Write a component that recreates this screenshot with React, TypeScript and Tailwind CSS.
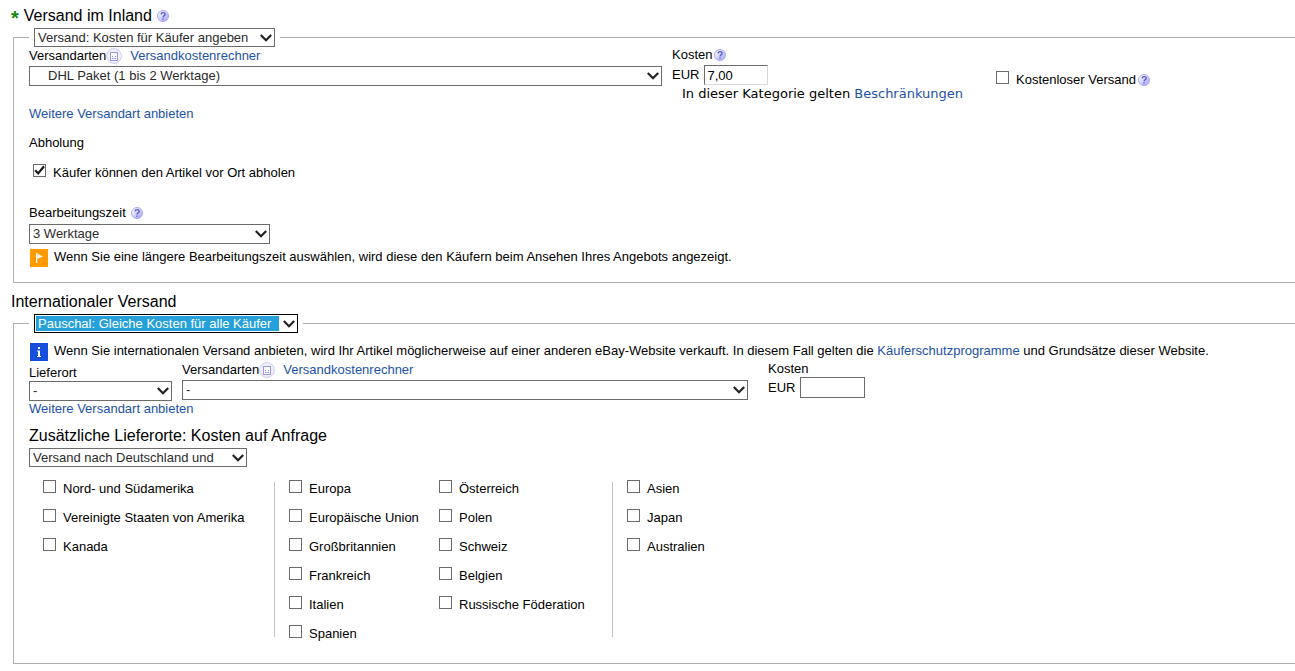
import { useState } from "react";
import type { ReactNode } from "react";

const europeWest = ["Europa", "Europäische Union", "Großbritannien", "Frankreich", "Italien", "Spanien"];
const europeEast = ["Österreich", "Polen", "Schweiz", "Belgien", "Russische Föderation"];
const america = ["Nord- und Südamerika", "Vereinigte Staaten von Amerika", "Kanada"];
const asia = ["Asien", "Japan", "Australien"];

function HelpIcon() {
  return (
    <svg viewBox="0 0 12 12" className="size-3 shrink-0" aria-hidden="true">
      <defs>
        <linearGradient id="help" x1="0" y1="0" x2="1" y2="1">
          <stop offset="0.2" stopColor="#f4f4ff" />
          <stop offset="1" stopColor="#9c9cf8" />
        </linearGradient>
      </defs>
      <circle cx="6" cy="6" r="5.5" fill="url(#help)" stroke="#9f9fee" strokeWidth="0.9" />
      <path
        d="M4 4.4C4.2 2.1 8.2 2.1 8.1 4.4C8 5.8 6.1 5.6 6 7.4M6 8.4V9.7"
        fill="none"
        stroke="#5252c8"
        strokeWidth="1.3"
      />
    </svg>
  );
}

function CalculatorIcon() {
  return (
    <svg viewBox="0 0 16 16" className="size-4 shrink-0" aria-hidden="true">
      <circle cx="8" cy="8" r="7.4" fill="#f0f0ff" stroke="#cdcdf8" />
      <rect x="4.5" y="4.5" width="7" height="8" fill="#f8f8ff" stroke="#9a96e0" />
      <path d="M6 8.5h1M9 8.5h1M6 10.5h1M7.5 10.5h1M9 10.5h1" stroke="#8f8bdc" />
    </svg>
  );
}

function FlagIcon() {
  return (
    <svg viewBox="0 0 18 18" className="size-[18px] shrink-0" aria-hidden="true">
      <rect width="18" height="18" fill="#ff9a00" />
      <path d="M6 4h1.3v10H6z" fill="#fff" />
      <path d="M7.3 4.6L13 7.4L7.3 10z" fill="#fff3e0" />
    </svg>
  );
}

function InfoIcon() {
  return (
    <svg viewBox="0 0 18 18" className="size-[18px] shrink-0" aria-hidden="true">
      <rect width="18" height="18" fill="#1450dc" />
      <path d="M8 4h2v2H8zM7 7.5h3V13h1v1H7v-1h1V8.5H7z" fill="#fff" />
    </svg>
  );
}

type SelectProps = {
  id: string;
  label?: string;
  options: string[];
  className?: string;
  selectClass?: string;
};

function Select({
  id,
  label,
  options,
  className = "",
  selectClass = "h-5 border-[#6b6b6b] pr-5 pl-[3px] text-[#2b2b2b]",
}: SelectProps) {
  return (
    <span className={`grid ${className}`}>
      <select
        id={id}
        aria-label={label}
        className={`col-start-1 row-start-1 w-full appearance-none rounded-none border text-[13px] leading-4 outline-none ${selectClass}`}
      >
        {options.map((o) => (
          <option key={o}>{o}</option>
        ))}
      </select>
      <svg
        viewBox="0 0 12 8"
        className="pointer-events-none col-start-1 row-start-1 mr-[3px] h-2 w-3 self-center justify-self-end"
        aria-hidden="true"
      >
        <path d="M0.8 1L6 6.2L11.2 1" fill="none" stroke="#222" strokeWidth="2.2" />
      </svg>
    </span>
  );
}

function Checkbox({ label, checked = false, children }: { label: string; checked?: boolean; children?: ReactNode }) {
  const [on, setOn] = useState(checked);
  return (
    <div className="flex h-4 items-start">
      <label className="flex items-start gap-[7px]">
        <span className="grid">
          <input
            type="checkbox"
            checked={on}
            onChange={(e) => setOn(e.target.checked)}
            className="col-start-1 row-start-1 size-[13px] appearance-none border border-[#6b6b6b] bg-white"
          />
          {on && (
            <svg viewBox="0 0 13 13" className="pointer-events-none col-start-1 row-start-1 size-[13px]" aria-hidden="true">
              <path d="M2.2 6.2L5.2 9.4L11 2.2" fill="none" stroke="#1a1a1a" strokeWidth="2.2" />
            </svg>
          )}
        </span>
        <span className="leading-[18px] whitespace-nowrap">{label}</span>
      </label>
      {children}
    </div>
  );
}

function CheckboxList({ items, className }: { items: string[]; className: string }) {
  return (
    <div className={`flex flex-col gap-[13px] ${className}`}>
      {items.map((item) => (
        <Checkbox key={item} label={item} />
      ))}
    </div>
  );
}

function Link({ children }: { children: ReactNode }) {
  return (
    <a href="#" className="text-[#1c52a8]">
      {children}
    </a>
  );
}

export default function App() {
  return (
    <form className="bg-white pl-[11px] font-['Liberation_Sans',Arial,sans-serif] text-[13px] leading-4 text-black">
      <h2 className="flex h-7 items-center gap-[5px] pt-1 text-base">
        <span className="pt-1 text-xl leading-5 font-bold text-[#128a12]">*</span>
        Versand im Inland
        <HelpIcon />
      </h2>
      <fieldset className="ml-0.5 border border-r-0 border-[#b0b0b0] pb-[15px] pl-[15px]">
        <legend className="px-[5px]">
          <Select
            id="domestic"
            label="Versand im Inland"
            options={["Versand: Kosten für Käufer angeben"]}
            className="w-[241px]"
            selectClass="h-[19px] border-[#6b6b6b] pr-5 pl-[3px] text-[#2b2b2b]"
          />
        </legend>
        <div className="flex gap-2.5">
          <div className="w-1/2 shrink-0">
            <div className="mb-0.5 flex h-[17px] items-center">
              <label htmlFor="service">Versandarten</label>
              <CalculatorIcon />
              <span className="ml-2">
                <Link>Versandkostenrechner</Link>
              </span>
            </div>
            <Select
              id="service"
              options={["DHL Paket (1 bis 2 Werktage)"]}
              selectClass="h-5 border-[#6b6b6b] pr-5 pl-[18px] text-[#2b2b2b]"
            />
          </div>
          <div className="w-[314px] shrink-0">
            <div className="mb-0.5 flex h-4 items-center gap-0.5">
              <label htmlFor="cost">Kosten</label>
              <HelpIcon />
            </div>
            <div className="flex items-center gap-[5px]">
              EUR
              <input
                id="cost"
                defaultValue="7,00"
                className="h-5 w-16 border border-t-[#6b6b6b] border-r-[#d8d8d8] border-b-[#d8d8d8] border-l-[#6b6b6b] px-0.5 outline-none"
              />
            </div>
            <p className="pl-2.5 font-['DejaVu_Sans',Verdana,sans-serif] leading-[18px] whitespace-nowrap">
              In dieser Kategorie gelten <Link>Beschränkungen</Link>
            </p>
          </div>
          <div className="pt-6">
            <Checkbox label="Kostenloser Versand">
              <span className="pt-[3px] pl-0.5">
                <HelpIcon />
              </span>
            </Checkbox>
          </div>
        </div>
        <p className="mt-[3px]">
          <Link>Weitere Versandart anbieten</Link>
        </p>
        <p className="my-[13px]">Abholung</p>
        <div className="pl-1">
          <Checkbox label="Käufer können den Artikel vor Ort abholen" checked />
        </div>
        <div className="mt-[25px] mb-[3px] flex items-center gap-[5px]">
          <label htmlFor="handling">Bearbeitungszeit</label>
          <HelpIcon />
        </div>
        <Select id="handling" options={["3 Werktage"]} className="w-[241px]" />
        <p className="mt-[5px] flex gap-1.5 pl-px">
          <FlagIcon />
          Wenn Sie eine längere Bearbeitungszeit auswählen, wird diese den Käufern beim Ansehen Ihres Angebots angezeigt.
        </p>
      </fieldset>

      <h2 className="mt-[7px] h-6 text-base">Internationaler Versand</h2>
      <fieldset className="ml-0.5 border border-r-0 border-[#b0b0b0] pb-[22px] pl-[15px]">
        <legend className="px-[5px]">
          <Select
            id="international"
            label="Internationaler Versand"
            options={["Pauschal: Gleiche Kosten für alle Käufer"]}
            className="w-[264px]"
            selectClass="h-[19px] border-black bg-[#26a0da] bg-clip-content pt-px pr-[18px] pb-px pl-px indent-[2px] text-white"
          />
        </legend>
        <p className="mt-2.5 flex gap-1.5 pl-px">
          <InfoIcon />
          <span>
            Wenn Sie internationalen Versand anbieten, wird Ihr Artikel möglicherweise auf einer anderen eBay-Website
            verkauft. In diesem Fall gelten die <Link>Käuferschutzprogramme</Link> und Grundsätze dieser Website.
          </span>
        </p>
        <div className="grid grid-cols-[143px_minmax(0,566px)_auto] gap-x-2.5">
          <div className="pt-1">
            <label htmlFor="place" className="block">
              Lieferort
            </label>
            <Select id="place" options={["-"]} />
          </div>
          <div>
            <div className="mb-0.5 flex h-[17px] items-center">
              <label htmlFor="intlService">Versandarten</label>
              <CalculatorIcon />
              <span className="ml-2">
                <Link>Versandkostenrechner</Link>
              </span>
            </div>
            <Select id="intlService" options={["-"]} />
          </div>
          <div className="pl-2.5">
            <label htmlFor="intlCost" className="block">
              Kosten
            </label>
            <div className="flex items-center gap-[5px]">
              EUR
              <input id="intlCost" className="h-[21px] w-[65px] border border-[#6b6b6b] px-0.5 outline-none" />
            </div>
          </div>
        </div>
        <p>
          <Link>Weitere Versandart anbieten</Link>
        </p>
        <h3 className="mt-2 mb-px text-base leading-[22px]">
          <label htmlFor="extra">Zusätzliche Lieferorte: Kosten auf Anfrage</label>
        </h3>
        <Select
          id="extra"
          options={["Versand nach Deutschland und"]}
          className="w-[218px]"
          selectClass="h-[19px] border-[#6b6b6b] pr-5 pl-[3px] text-[#2b2b2b]"
        />
        <div className="mt-[13px] flex">
          <CheckboxList items={america} className="w-[245px] pl-3.5" />
          <div className="mt-0.5 mb-1 w-px bg-[#c4c4c4]" />
          <CheckboxList items={europeWest} className="w-[164px] pl-3.5" />
          <CheckboxList items={europeEast} className="w-[173px]" />
          <div className="mt-0.5 mb-1 w-px bg-[#c4c4c4]" />
          <CheckboxList items={asia} className="pl-3.5" />
        </div>
      </fieldset>
    </form>
  );
}
